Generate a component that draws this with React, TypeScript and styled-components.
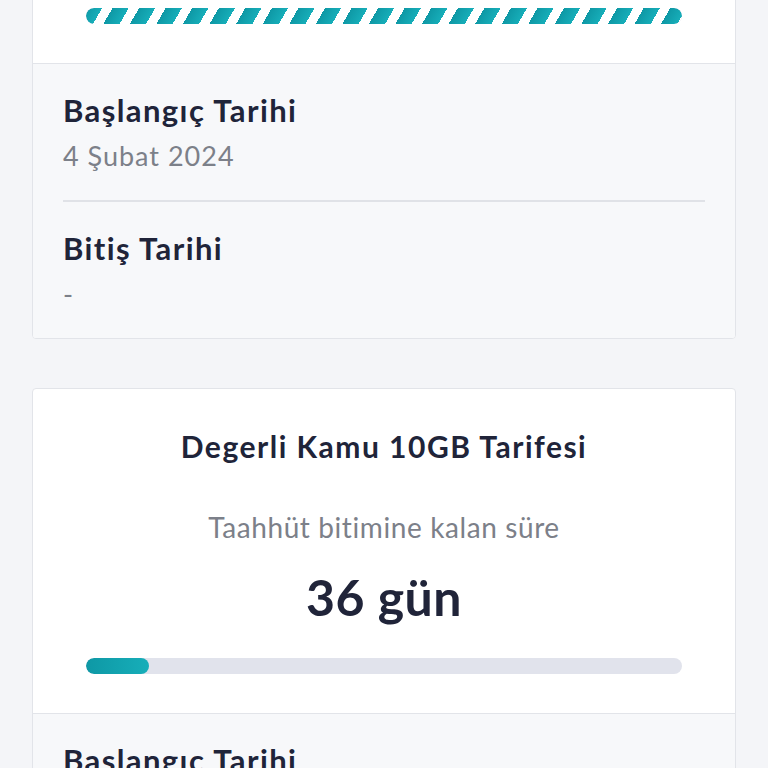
import React from 'react'
import styled, { createGlobalStyle } from 'styled-components'

const Colors = {
  page: '#f4f5f8',
  white: '#ffffff',
  section: '#f7f8fa',
  border: '#e2e4e9',
  divider: '#e0e2e7',
  ink: '#202439',
  muted: '#7c8089',
  track: '#e1e3ec',
  teal: '#0e98a5',
  tealLight: '#17aeb9',
}

interface Plan {
  name: string;
  label: string;
  remaining: string;
  progress: number;
  striped?: boolean;
  startDate: string;
  endDate: string;
}

const plans: Plan[] = [
  {
    name: 'Degerli Kamu 10GB Tarifesi',
    label: 'Taahhüt bitimine kalan süre',
    remaining: 'Süresiz',
    progress: 100,
    striped: true,
    startDate: '4 Şubat 2024',
    endDate: '-',
  },
  {
    name: 'Degerli Kamu 10GB Tarifesi',
    label: 'Taahhüt bitimine kalan süre',
    remaining: '36 gün',
    progress: 10.6,
    startDate: '4 Şubat 2024',
    endDate: '-',
  },
]

const GlobalStyle = createGlobalStyle`
  html, body {
    margin: 0;
    padding: 0;
    background: ${Colors.page};
    font-family: Lato, "Noto Sans", "Liberation Sans", sans-serif;
    overflow: hidden;
  }
`

const PlanCard = ({ plan }: { plan: Plan }) => (
  <Card>
    <Summary>
      <Title>{plan.name}</Title>
      <Label>{plan.label}</Label>
      <Remaining>{plan.remaining}</Remaining>
      <Track>
        {plan.striped ? (
          <Stripes />
        ) : (
          <Fill style={{ width: `${plan.progress}%` }} />
        )}
      </Track>
    </Summary>
    <Details>
      <Row>
        <RowTitle>Başlangıç Tarihi</RowTitle>
        <RowValue>{plan.startDate}</RowValue>
      </Row>
      <Row>
        <RowTitle>Bitiş Tarihi</RowTitle>
        <RowValue>{plan.endDate}</RowValue>
      </Row>
    </Details>
  </Card>
)

export default function App() {
  return (
    <>
      <GlobalStyle />
      <Page>
        {plans.map((plan, i) => (
          <PlanCard key={i} plan={plan} />
        ))}
      </Page>
    </>
  )
}

// the screen is scrolled down, so the first card starts above the fold
const Page = styled.div`
  display: flex;
  flex-direction: column;
  gap: 49px;
  padding: 0 32px 40px;
  margin-top: -262px;
`

const Card = styled.div`
  display: flex;
  flex-direction: column;
  background-color: ${Colors.white};
  border: 1px solid ${Colors.border};
  border-radius: 4px;
  overflow: hidden;
`

const Summary = styled.div`
  display: flex;
  flex-direction: column;
  align-items: center;
  padding: 39px 53px 39px;
`

const Title = styled.div`
  font-size: 30px;
  line-height: 36px;
  font-weight: 700;
  letter-spacing: 1.5px;
  color: ${Colors.ink};
`

const Label = styled.div`
  margin-top: 46px;
  font-size: 28px;
  line-height: 34px;
  letter-spacing: 0.6px;
  color: ${Colors.muted};
`

const Remaining = styled.div`
  margin-top: 23px;
  font-size: 50px;
  line-height: 60px;
  font-weight: 700;
  letter-spacing: 0.5px;
  color: ${Colors.ink};
`

const Track = styled.div`
  align-self: stretch;
  height: 16px;
  margin-top: 31px;
  border-radius: 8px;
  background-color: ${Colors.track};
  overflow: hidden;
`

const Fill = styled.div`
  height: 100%;
  border-radius: 8px;
  background: linear-gradient(90deg, ${Colors.teal}, ${Colors.tealLight});
`

const Stripes = styled.div`
  height: 100%;
  border-radius: 8px;
  background-color: ${Colors.white};
  background-image: repeating-linear-gradient(
    120deg,
    ${Colors.teal} 0,
    ${Colors.tealLight} 14px,
    transparent 14px,
    transparent 23px
  );
`

const Details = styled.div`
  display: flex;
  flex-direction: column;
  padding: 0 30px;
  background-color: ${Colors.section};
  border-top: 1px solid ${Colors.border};
`

const Row = styled.div`
  display: flex;
  flex-direction: column;
  gap: 10px;
  padding: 27px 0 27px;

  & + & {
    border-top: 2px solid ${Colors.divider};
  }
`

const RowTitle = styled.div`
  font-size: 31px;
  line-height: 38px;
  font-weight: 700;
  letter-spacing: 1.4px;
  color: ${Colors.ink};
`

const RowValue = styled.div`
  font-size: 27px;
  line-height: 34px;
  letter-spacing: 1px;
  color: ${Colors.muted};
`
